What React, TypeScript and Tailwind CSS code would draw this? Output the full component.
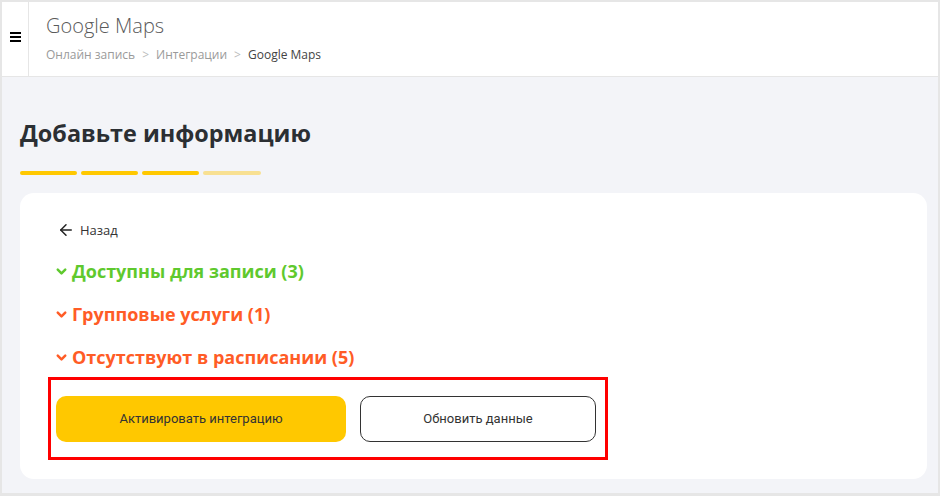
import { ChevronDown, ArrowLeft } from 'lucide-react'

const sections = [
  { title: 'Доступны для записи (3)', color: 'text-[#5fc92e]' },
  { title: 'Групповые услуги (1)', color: 'text-[#ff5c26]' },
  { title: 'Отсутствуют в расписании (5)', color: 'text-[#ff5c26]' },
]

export default function App() {
  return (
    <div className="w-[940px] h-[496px] flex flex-col border-2 border-b-[3px] border-[#e6e6e6] bg-[#f3f4f8] font-['Open_Sans',sans-serif] overflow-hidden">
      {/* шапка */}
      <header className="h-[75px] shrink-0 bg-white border-b border-[#e6e6e6] flex">
        <div className="w-[27px] border-r border-[#e6e6e6] flex items-center justify-center pl-[1px] pb-[5px]">
          <div className="flex flex-col gap-[2px]">
            <span className="block w-[11px] h-[2px] bg-black" />
            <span className="block w-[11px] h-[2px] bg-black" />
            <span className="block w-[11px] h-[2px] bg-black" />
          </div>
        </div>
        <div className="pl-[17px] pt-[10px]">
          <div className="text-[20px] leading-[28px] font-light text-[#5a5a5a]">Google Maps</div>
          <div className="mt-[7px] text-[12px] leading-[16px] text-[#9a9a9a] flex items-center">
            <span>Онлайн запись</span>
            <span className="mx-[7px] text-[#bbbbbb]">&gt;</span>
            <span>Интеграции</span>
            <span className="mx-[7px] text-[#bbbbbb]">&gt;</span>
            <span className="text-[#444444]">Google Maps</span>
          </div>
        </div>
      </header>

      <main className="flex-1 pl-[18px] pr-[11px] pb-[14px] flex flex-col">
        <h1 className="mt-[40px] text-[23.4px] leading-[32px] font-bold text-[#2b2f33]">Добавьте информацию</h1>
        <div className="mt-[22px] flex gap-[4px]">
          <span className="block w-[57px] h-[4px] rounded-full bg-[#ffc800]" />
          <span className="block w-[57px] h-[4px] rounded-full bg-[#ffc800]" />
          <span className="block w-[57px] h-[4px] rounded-full bg-[#ffc800]" />
          <span className="block w-[58px] h-[4px] rounded-full bg-[#f8e092]" />
        </div>

        <section className="mt-[18px] flex-1 bg-white rounded-[14px] pl-[28px] pt-[27px]">
          <button className="flex items-center gap-[5px] pl-[9px] text-[13px] leading-[20px] text-[#333333]">
            <ArrowLeft size={18} strokeWidth={2} className="text-[#222222]" />
            Назад
          </button>

          <div className="mt-[19px] flex flex-col gap-[19px] pl-[6px]">
            {sections.map((s) => (
              <div key={s.title} className={`flex items-center gap-[3px] text-[18px] leading-[24px] font-bold ${s.color}`}>
                <ChevronDown size={15} strokeWidth={4} />
                {s.title}
              </div>
            ))}
          </div>

          <div className="mt-[8px] w-[560px] h-[83px] border-[3px] border-[#ff0000] pl-[5px] pt-[16px] flex gap-[14px] font-['Roboto',sans-serif]">
            <button className="w-[290px] h-[46px] rounded-[10px] bg-[#ffc800] text-[13px] text-[#333333]">
              Активировать интеграцию
            </button>
            <button className="w-[236px] h-[46px] rounded-[10px] border border-[#333333] bg-white text-[13px] text-[#333333]">
              Обновить данные
            </button>
          </div>
        </section>
      </main>
    </div>
  )
}
